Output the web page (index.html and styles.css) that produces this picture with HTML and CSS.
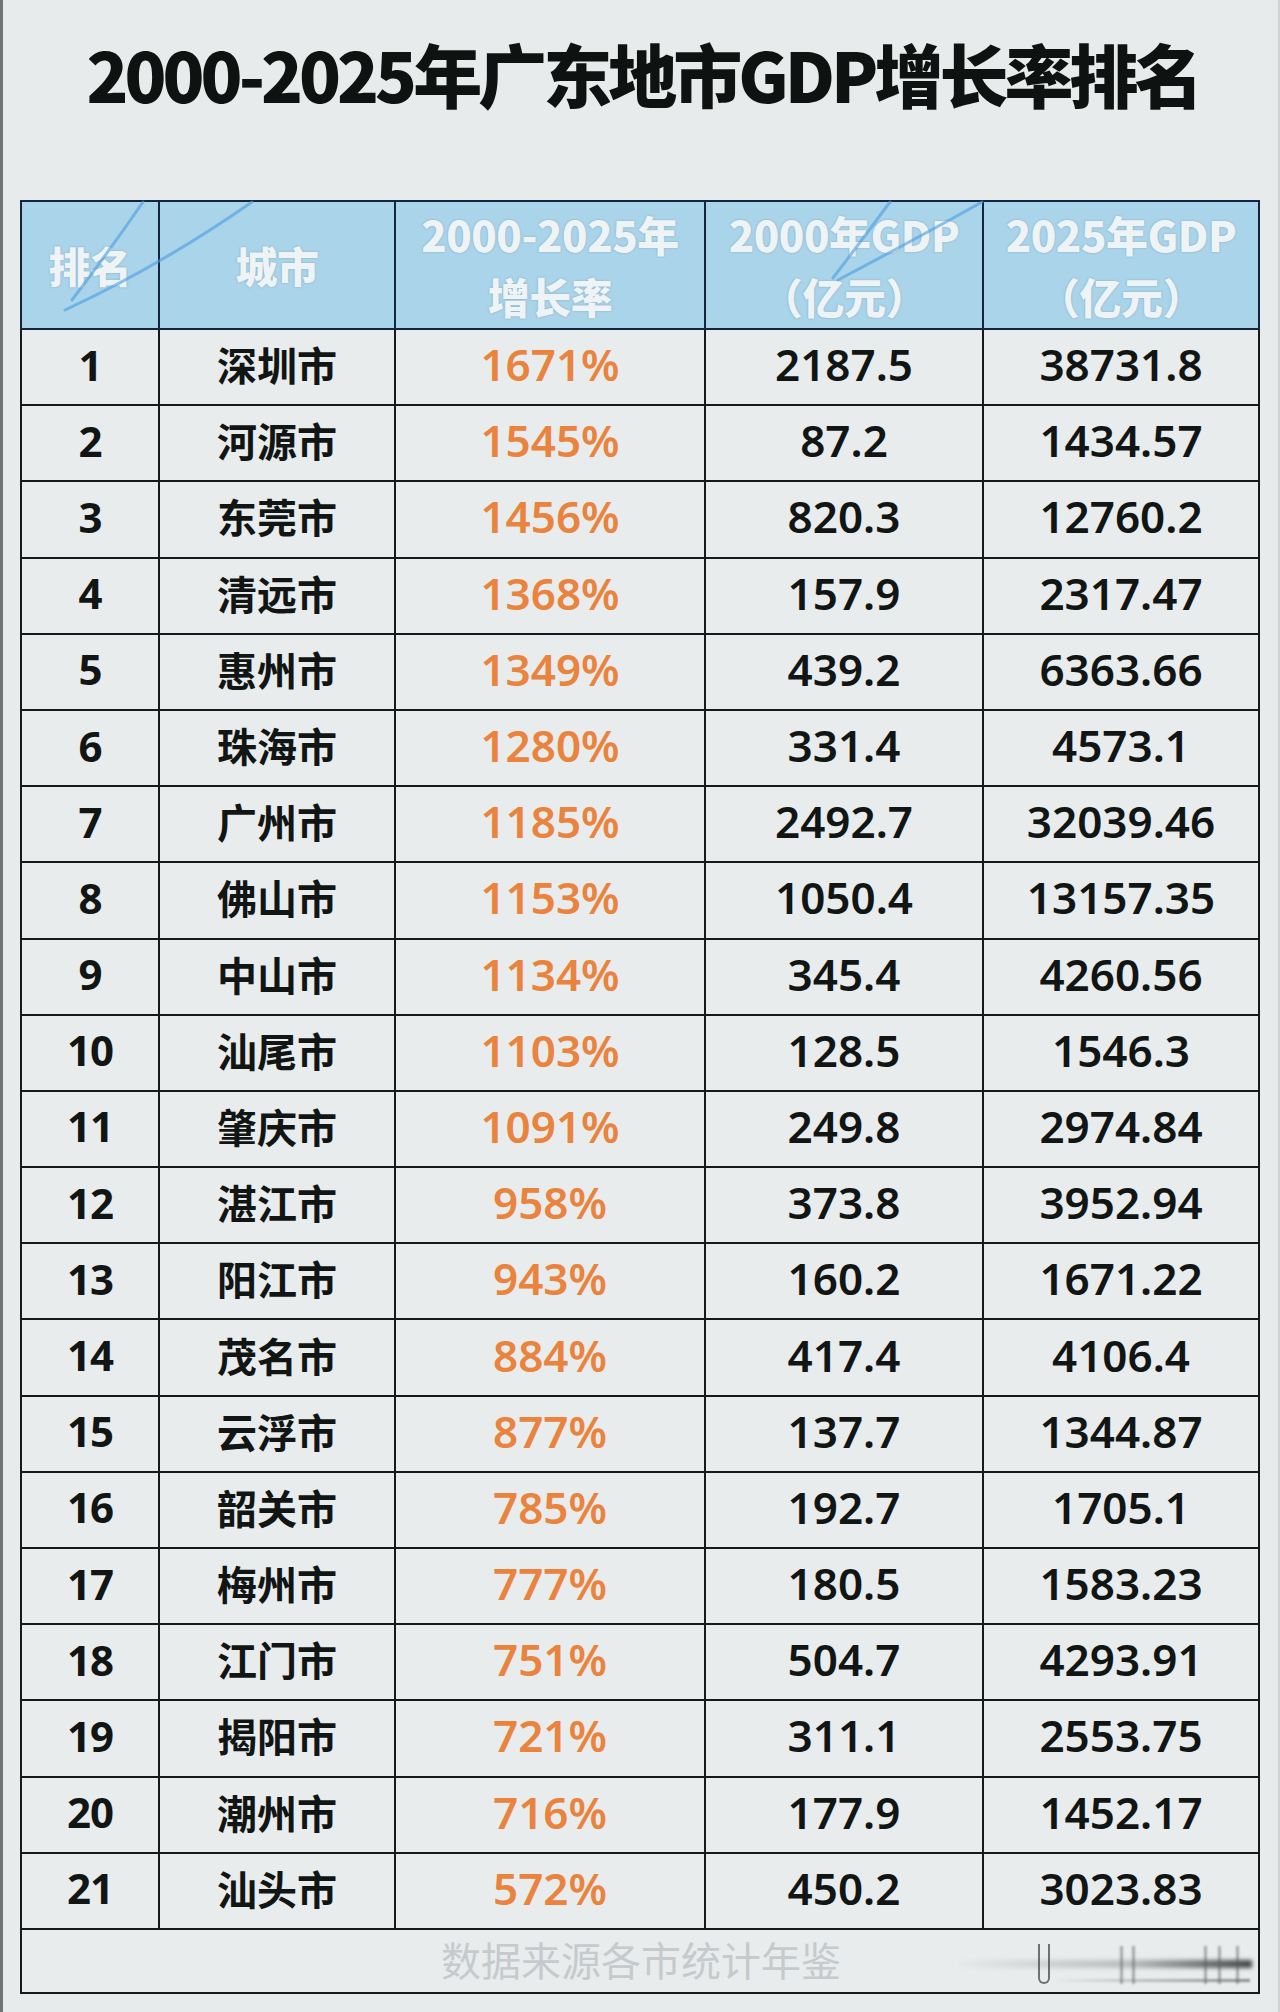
FILE: index.html
```html
<!DOCTYPE html>
<html lang="zh-CN">
<head>
<meta charset="utf-8">
<title>2000-2025年广东地市GDP增长率排名</title>
<link rel="stylesheet" href="styles.css">
</head>
<body>
<div class="page">
  <h1 class="title">2000-2025年广东地市GDP增长率排名</h1>
  <div class="table-wrap">
    <table class="rank-table">
      <colgroup>
        <col class="c-rank"><col class="c-city"><col class="c-rate"><col class="c-gdp0"><col class="c-gdp1">
      </colgroup>
      <thead>
        <tr>
          <th>排名</th>
          <th>城市</th>
          <th>2000-2025年<br>增长率</th>
          <th>2000年GDP<br>（亿元）</th>
          <th>2025年GDP<br>（亿元）</th>
        </tr>
      </thead>
      <tbody>
        <tr><td class="rank">1</td><td class="city">深圳市</td><td class="rate">1671%</td><td class="num">2187.5</td><td class="num">38731.8</td></tr>
        <tr><td class="rank">2</td><td class="city">河源市</td><td class="rate">1545%</td><td class="num">87.2</td><td class="num">1434.57</td></tr>
        <tr><td class="rank">3</td><td class="city">东莞市</td><td class="rate">1456%</td><td class="num">820.3</td><td class="num">12760.2</td></tr>
        <tr><td class="rank">4</td><td class="city">清远市</td><td class="rate">1368%</td><td class="num">157.9</td><td class="num">2317.47</td></tr>
        <tr><td class="rank">5</td><td class="city">惠州市</td><td class="rate">1349%</td><td class="num">439.2</td><td class="num">6363.66</td></tr>
        <tr><td class="rank">6</td><td class="city">珠海市</td><td class="rate">1280%</td><td class="num">331.4</td><td class="num">4573.1</td></tr>
        <tr><td class="rank">7</td><td class="city">广州市</td><td class="rate">1185%</td><td class="num">2492.7</td><td class="num">32039.46</td></tr>
        <tr><td class="rank">8</td><td class="city">佛山市</td><td class="rate">1153%</td><td class="num">1050.4</td><td class="num">13157.35</td></tr>
        <tr><td class="rank">9</td><td class="city">中山市</td><td class="rate">1134%</td><td class="num">345.4</td><td class="num">4260.56</td></tr>
        <tr><td class="rank">10</td><td class="city">汕尾市</td><td class="rate">1103%</td><td class="num">128.5</td><td class="num">1546.3</td></tr>
        <tr><td class="rank">11</td><td class="city">肇庆市</td><td class="rate">1091%</td><td class="num">249.8</td><td class="num">2974.84</td></tr>
        <tr><td class="rank">12</td><td class="city">湛江市</td><td class="rate">958%</td><td class="num">373.8</td><td class="num">3952.94</td></tr>
        <tr><td class="rank">13</td><td class="city">阳江市</td><td class="rate">943%</td><td class="num">160.2</td><td class="num">1671.22</td></tr>
        <tr><td class="rank">14</td><td class="city">茂名市</td><td class="rate">884%</td><td class="num">417.4</td><td class="num">4106.4</td></tr>
        <tr><td class="rank">15</td><td class="city">云浮市</td><td class="rate">877%</td><td class="num">137.7</td><td class="num">1344.87</td></tr>
        <tr><td class="rank">16</td><td class="city">韶关市</td><td class="rate">785%</td><td class="num">192.7</td><td class="num">1705.1</td></tr>
        <tr><td class="rank">17</td><td class="city">梅州市</td><td class="rate">777%</td><td class="num">180.5</td><td class="num">1583.23</td></tr>
        <tr><td class="rank">18</td><td class="city">江门市</td><td class="rate">751%</td><td class="num">504.7</td><td class="num">4293.91</td></tr>
        <tr><td class="rank">19</td><td class="city">揭阳市</td><td class="rate">721%</td><td class="num">311.1</td><td class="num">2553.75</td></tr>
        <tr><td class="rank">20</td><td class="city">潮州市</td><td class="rate">716%</td><td class="num">177.9</td><td class="num">1452.17</td></tr>
        <tr><td class="rank">21</td><td class="city">汕头市</td><td class="rate">572%</td><td class="num">450.2</td><td class="num">3023.83</td></tr>
      </tbody>
      <tfoot>
        <tr>
          <td colspan="5" class="source">
            <span class="source-text">数据来源各市统计年鉴</span>
            <span class="scan-mark" aria-hidden="true">
              <span class="sm-h1"></span><span class="sm-h2"></span>
              <span class="sm-u"></span>
              <span class="sm-v v1"></span><span class="sm-v v2"></span><span class="sm-v v3"></span><span class="sm-v v4"></span><span class="sm-v v5"></span>
            </span>
          </td>
        </tr>
      </tfoot>
    </table>
    <svg class="scribble" width="1240" height="128" viewBox="0 0 1240 128" aria-hidden="true">
      <path d="M52 100 Q 90 50 123 2" />
      <path d="M45 110 Q 140 66 232 2" />
      <path d="M813 78 Q 842 40 870 2" />
      <path d="M818 80 Q 905 34 962 2" />
    </svg>
  </div>
</div>
</body>
</html>
```

FILE: styles.css
```css
* { box-sizing: border-box; }

html, body {
  margin: 0;
  padding: 0;
}

body {
  background: #e7ebeb;
  width: 1280px;
  min-height: 2012px;
}

.page {
  width: 1280px;
  min-height: 2012px;
  border-left: 3px solid #6f7374;
  border-right: 2px solid #cfd3d4;
  background: #e7ebeb;
  padding-left: 17px;
}

.title {
  margin: 0;
  height: 146px;
  line-height: 146px;
  text-align: center;
  font-family: "Noto Sans CJK SC", "Noto Sans", sans-serif;
  font-weight: 900;
  font-size: 69px;
  letter-spacing: -4px;
  color: #0e1210;
  padding-right: 12px;
}

.table-wrap {
  position: relative;
  width: 1238px;
  margin-top: 54px;
}

.rank-table {
  width: 1238px;
  table-layout: fixed;
  border-collapse: collapse;
  background: #e8ecec;
}

.c-rank { width: 138px; }
.c-city { width: 236px; }
.c-rate { width: 310px; }
.c-gdp0 { width: 278px; }
.c-gdp1 { width: 276px; }

.rank-table th {
  height: 128px;
  padding: 0;
  background: #a9d4ea;
  border: 2.5px solid #14263d;
  font-family: "Noto Sans CJK SC", "Noto Sans", sans-serif;
  font-weight: 900;
  font-size: 42px;
  line-height: 62px;
  color: #eef3f5;
  text-shadow: 0 0 2px rgba(110, 140, 160, 0.7);
  text-align: center;
  vertical-align: middle;
  letter-spacing: -0.5px;
}

.rank-table td {
  height: 76.2px;
  padding: 0 0 6px 0;
  border: 2px solid #161a1a;
  text-align: center;
  vertical-align: middle;
  color: #111514;
}

.rank {
  font-family: "Noto Sans", sans-serif;
  font-weight: 700;
  font-size: 42px;
  letter-spacing: -1px;
}

.city {
  font-family: "Noto Sans CJK SC", "Noto Sans", sans-serif;
  font-weight: 700;
  font-size: 40px;
}

.rate {
  font-family: "Noto Sans", sans-serif;
  font-weight: 600;
  font-size: 44px;
  letter-spacing: 0;
  color: #e9833d !important;
}

.num {
  font-family: "Noto Sans", sans-serif;
  font-weight: 600;
  font-size: 44px;
  letter-spacing: 0;
}

.rank-table td.source {
  height: 64px;
  padding: 0;
  position: relative;
  border-top: 2px solid #161a1a;
}

.source-text {
  font-family: "Noto Sans CJK SC", "Noto Sans", sans-serif;
  font-weight: 400;
  font-size: 40px;
  color: #c6cacc;
  letter-spacing: 0;
  position: relative;
  left: 1px;
  top: -2px;
}

.scan-mark {
  position: absolute;
  left: 920px;
  top: 10px;
  width: 318px;
  height: 48px;
  pointer-events: none;
}

.sm-h1 {
  position: absolute;
  left: 10px;
  right: 8px;
  top: 20px;
  height: 8px;
  background: linear-gradient(to right, rgba(120,120,120,0), rgba(100,100,100,0.35) 60%, rgba(40,40,40,0.85));
  filter: blur(2px);
}

.sm-h2 {
  position: absolute;
  left: 110px;
  right: 10px;
  top: 39px;
  height: 3px;
  background: linear-gradient(to right, rgba(120,120,120,0), rgba(80,80,80,0.6));
  filter: blur(1px);
}

.sm-u {
  position: absolute;
  left: 96px;
  top: 4px;
  width: 12px;
  height: 40px;
  border: 2px solid rgba(60,60,60,0.7);
  border-top: none;
  border-radius: 0 0 6px 6px;
  filter: blur(0.6px);
}

.sm-v {
  position: absolute;
  top: 6px;
  width: 3px;
  height: 38px;
  background: rgba(90,90,90,0.45);
  filter: blur(1.2px);
}
.v1 { left: 178px; }
.v2 { left: 190px; }
.v3 { left: 262px; }
.v4 { left: 276px; }
.v5 { left: 294px; }

.scribble {
  position: absolute;
  left: 0;
  top: 0;
  pointer-events: none;
}

.scribble path {
  fill: none;
  stroke: #4a9de0;
  stroke-width: 3;
  stroke-linecap: round;
  opacity: 0.6;
}
```
